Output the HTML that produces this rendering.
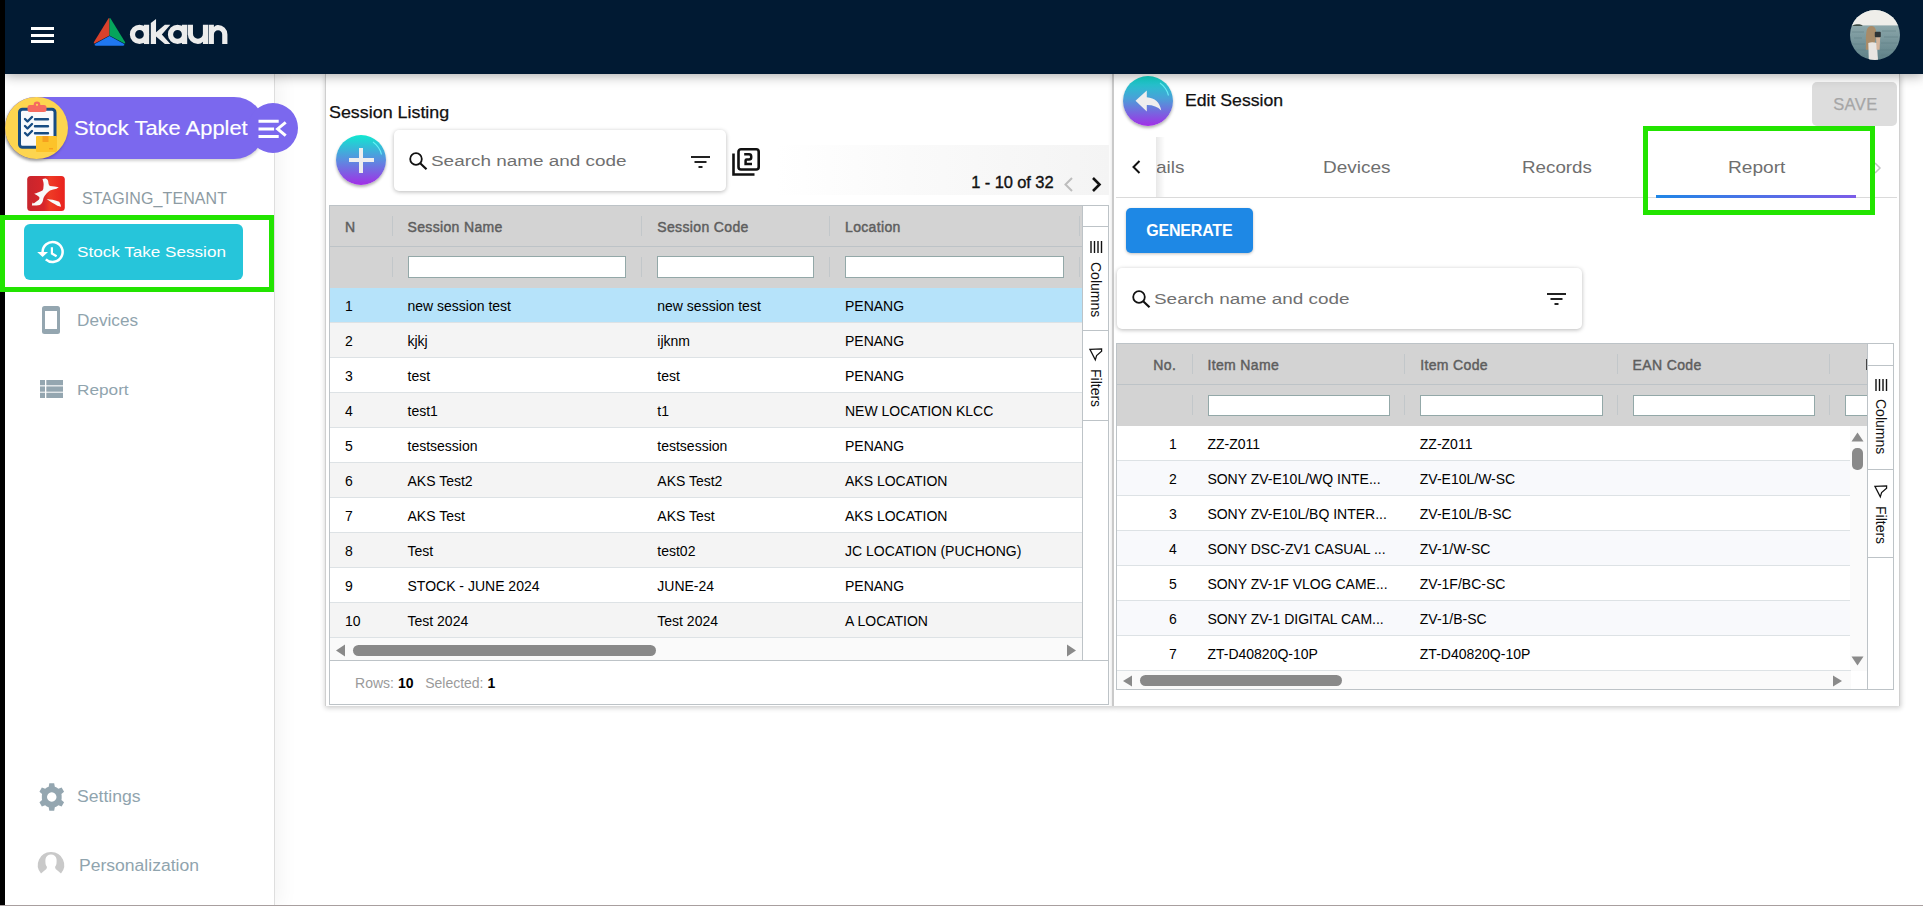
<!DOCTYPE html>
<html><head><meta charset="utf-8">
<style>
*{box-sizing:border-box;margin:0;padding:0}
html,body{width:1923px;height:906px;overflow:hidden;background:#fff;font-family:"Liberation Sans",sans-serif;position:relative}
.a{position:absolute}
.t{position:absolute;white-space:nowrap;line-height:1}
svg{position:absolute;overflow:visible}
</style></head>
<body>
<div class="a" style="left:0px;top:0px;width:5px;height:906px;background:#000;z-index:50"></div>
<div class="a" style="left:5px;top:0px;width:1918px;height:74px;background:#011a33;z-index:40;box-shadow:0 1px 12px rgba(0,0,0,.38)"></div>
<div class="a" style="left:0;top:0;width:1923px;height:74px;z-index:41">
<div class="a" style="left:31px;top:27px;width:23px;height:3px;background:#fff"></div>
<div class="a" style="left:31px;top:33.5px;width:23px;height:3px;background:#fff"></div>
<div class="a" style="left:31px;top:40px;width:23px;height:3px;background:#fff"></div>
<svg style="left:93px;top:17px" width="34" height="30" viewBox="0 0 34 30">
<path d="M15.6 1.2 Q16.5 0.6 16.5 2 L16.5 18.5 L1.5 26.5 Q0.2 26.5 1 25 Z" fill="#d9412b"/>
<path d="M17.4 1.2 Q16.5 0.6 16.5 2 L16.5 18.5 L31.5 26.5 Q32.8 26.5 32 25 Z" fill="#06a45c"/>
<path d="M16.5 19 L1.8 27 Q1 28.6 3 28.8 L30 28.8 Q32 28.6 31.2 27 Z" fill="#1f77f0"/>
</svg>
<svg style="left:126px;top:14px" width="106" height="36" viewBox="0 0 1923 653"><g fill="#ececec" fill-rule="evenodd">
<path d="M70 370 A175 175 0 1 0 420 370 A175 175 0 1 0 70 370 Z M165 370 A80 80 0 1 1 325 370 A80 80 0 1 1 165 370 Z"/>
<rect x="325" y="195" width="95" height="350"/>
<path d="M450 165 L545 90 V545 H450 Z M545 330 L705 195 H805 L650 370 L805 545 H705 L545 410 Z"/>
<path d="M760 370 A175 175 0 1 0 1110 370 A175 175 0 1 0 760 370 Z M855 370 A80 80 0 1 1 1015 370 A80 80 0 1 1 855 370 Z"/>
<rect x="1015" y="195" width="95" height="350"/>
<path d="M1120 195 H1215 V360 A90 90 0 0 0 1395 360 V195 H1490 V545 H1395 V505 Q1360 545 1305 545 A185 185 0 0 1 1120 360 Z"/>
<path d="M1500 545 V195 H1595 V235 Q1630 195 1670 200 A170 170 0 0 1 1840 370 V545 H1745 V370 A75 75 0 0 0 1595 370 V545 Z"/>
</g></svg>
<svg style="left:1850px;top:10px" width="50" height="50" viewBox="0 0 50 50">
<defs><clipPath id="avc"><circle cx="25" cy="25" r="25"/></clipPath><linearGradient id="sea" x1="0" y1="0" x2="0" y2="1"><stop offset="0" stop-color="#a3b9ba"/><stop offset=".5" stop-color="#7f9ca1"/><stop offset="1" stop-color="#5f8188"/></linearGradient></defs>
<g clip-path="url(#avc)">
<rect x="0" y="0" width="50" height="50" fill="url(#sea)"/>
<path d="M2 22 H14 M32 21 H46 M4 28 H12 M34 27 H48 M1 34 H15 M31 33 H47 M5 40 H16 M30 40 H45 M8 46 H15 M31 45 H42" stroke="#5e7e84" stroke-width="0.9" opacity=".6"/>
<rect x="0" y="0" width="50" height="15.4" fill="#efeeea"/>
<path d="M2.2 15.9 Q4 13.8 8 14.3 Q11 13.6 12.9 15.9 Z" fill="#3a4a44"/>
<path d="M16.5 21 Q17.5 15.9 21.8 15.9 Q25.5 16.2 26 21 L25.5 30 Q24 36 22 39.7 L15.8 39.7 Q16.3 33 15.8 27 Z" fill="#a88b68"/>
<path d="M18.3 33 Q22 31.5 26.8 33 L28 50 L18.8 50 Z" fill="#e8e5e1"/>
<path d="M26 26.6 L30.2 27 L29.6 39.7 L26.6 39.7 Z" fill="#d5b59c"/>
<rect x="24.8" y="21.8" width="6" height="5.4" rx="1" fill="#2e3436"/>
</g></svg>
</div>
<div class="a" style="left:5px;top:74px;width:270px;height:832px;background:#fff;border-right:1px solid #dedede;z-index:20;box-shadow:4px 0 20px rgba(0,0,0,.055)"></div>
<div class="a" style="left:0;top:0;width:1923px;height:906px;z-index:55">
<div class="a" style="left:5px;top:97px;width:260px;height:62px;background:#7b68ee;border-radius:31px;box-shadow:0 2px 3px rgba(0,0,0,.18)"></div>
<div class="a" style="left:248px;top:103px;width:50px;height:50px;background:#7b68ee;border-radius:50%"></div>
<div class="a" style="left:5px;top:97px;width:63px;height:62px;background:#fdd54f;border-radius:50%;box-shadow:-1px 2px 3px rgba(0,0,0,.25)"></div>
<svg style="left:17px;top:101px" width="42" height="52" viewBox="0 0 42 52">
<rect x="2.5" y="8.2" width="35.5" height="38" rx="3" fill="#f8fafc" stroke="#174c83" stroke-width="3"/>
<rect x="10.5" y="4" width="19" height="7" rx="2.5" fill="#f56b60"/>
<circle cx="20" cy="3.8" r="3.3" fill="#f56b60"/><circle cx="20" cy="3.8" r="1.1" fill="#fdd54f"/>
<path d="M8 18 L10.5 20.5 L15 16 M8 25 L10.5 27.5 L15 23 M8 32 L10.5 34.5 L15 30" stroke="#174c83" stroke-width="2.4" fill="none" stroke-linecap="round" stroke-linejoin="round"/>
<path d="M18 18.3 H31 M18 25.3 H31 M18 32.3 H31" stroke="#174c83" stroke-width="2.4" stroke-linecap="round"/>
<rect x="19" y="35" width="21" height="16" rx="1" fill="#fcc32a"/>
<rect x="25.5" y="35" width="6" height="6" fill="#f6a01e"/>
<rect x="32" y="47" width="4" height="1.4" fill="#f6a01e"/>
</svg>
<div class="t" style="left:74.00px;top:118.27px;font-size:20px;color:#fff;font-weight:400;letter-spacing:0px;transform:scaleX(1.095);transform-origin:0 0;-webkit-text-stroke:0.15px #fff">Stock Take Applet</div>
<svg style="left:258px;top:118px" width="30" height="22" viewBox="0 0 30 22">
<path d="M0.5 3.3 H20.7 M0.5 11.1 H16.1 M0.5 18.4 H20.7" stroke="#fff" stroke-width="3"/>
<path d="M27.7 4.3 L19.6 10.9 L27.7 17.7" stroke="#fff" stroke-width="3" fill="none"/>
</svg>
<svg style="left:27px;top:176px" width="38" height="35" viewBox="0 0 38 35">
<defs><linearGradient id="rg" x1="0" x2="1"><stop offset="0" stop-color="#c7252d"/><stop offset=".45" stop-color="#d8262a"/><stop offset=".6" stop-color="#ee3b25"/><stop offset="1" stop-color="#e9221e"/></linearGradient></defs>
<rect x="0.2" y="0" width="37.6" height="35" rx="3.5" fill="url(#rg)"/>
<path fill="#f8fafa" d="M15.5 3 Q17.5 2.2 18.8 2.5 Q20.8 3.5 21.1 4.8 L21.6 8.1 Q22 9.5 23 9.9 Q28 10.2 31.8 11.3 Q30.5 12.3 29.5 12.7 Q26 13.4 23 14.5 Q21 15.8 19.3 17.8 Q17.5 19.8 16.5 22 Q16 24.5 15.5 26.1 Q14.5 28.2 12.8 28.9 Q8.5 29.6 4.9 29.4 Q5 27.8 5.8 26.6 L6.7 27.4 Q9.5 25.5 11.8 23.8 Q12.8 22.5 12.3 21 Q10 19 7.2 17.8 Q9 17 10.9 16.4 Q13.5 15.6 15.5 14.5 Q16.6 12.5 16.5 10.4 Q16.8 8.5 16.5 6.7 Q16 4.5 15.5 3 Z"/>
<path fill="#f8fafa" d="M19.7 22.9 Q23 23.2 25.7 23.8 Q29.5 24.6 32.2 25.7 Q33.8 28 34.1 30.8 Q32 30.5 30.4 29.8 Q27.5 28.2 24.8 26.6 Q22 24.8 19.7 22.9 Z"/>
</svg>
<div class="t" style="left:82.00px;top:190.96px;font-size:16px;color:#8d9ba3;font-weight:400;letter-spacing:0.1px;">STAGING_TENANT</div>
<div class="a" style="left:24px;top:224px;width:219px;height:56px;background:#26c5da;border-radius:6px"></div>
<svg style="left:30px;top:232px" width="42" height="40" viewBox="0 0 42 40">
<path d="M12.6 20.3 A10 10 0 1 1 15.8 27.3" stroke="#fff" stroke-width="2.5" fill="none"/>
<path d="M7.2 20 L18 20 L12.6 25 Z" fill="#fff"/>
<path d="M21.9 15.3 V21.5 L26.6 24.3" stroke="#fff" stroke-width="2.2" fill="none"/>
</svg>
<div class="t" style="left:76.70px;top:243.90px;font-size:15px;color:#fff;font-weight:400;letter-spacing:0px;transform:scaleX(1.14);transform-origin:0 0;">Stock Take Session</div>
<div class="a" style="left:0px;top:215px;width:274px;height:77px;border:5px solid #22e400;z-index:60"></div>
<svg style="left:42px;top:306px" width="18" height="28" viewBox="0 0 18 28">
<rect x="0" y="0" width="18" height="28" rx="2.5" fill="#94a6b0"/>
<rect x="3" y="5" width="12" height="18" fill="#fff"/>
</svg>
<div class="t" style="left:77.10px;top:312.56px;font-size:16px;color:#90a4ae;font-weight:400;letter-spacing:0px;transform:scaleX(1.072);transform-origin:0 0;">Devices</div>
<svg style="left:40px;top:380px" width="23" height="18" viewBox="0 0 23 18">
<g fill="#94a6b0"><rect x="0" y="0" width="5" height="5.3"/><rect x="6.3" y="0" width="16.7" height="5.3"/>
<rect x="0" y="6.4" width="5" height="5.3"/><rect x="6.3" y="6.4" width="16.7" height="5.3"/>
<rect x="0" y="12.7" width="5" height="5.3"/><rect x="6.3" y="12.7" width="16.7" height="5.3"/></g>
</svg>
<div class="t" style="left:77.00px;top:381.68px;font-size:15.5px;color:#90a4ae;font-weight:400;letter-spacing:0px;transform:scaleX(1.11);transform-origin:0 0;">Report</div>
<svg style="left:38.5px;top:784px" width="25.5" height="26" viewBox="-11.6 -11.8 23.2 23.6">
<path fill="#94a6b0" d="M-2.2 -12.5 H2.2 L2.8 -9.3 Q4.6 -8.7 6 -7.5 L9 -8.6 L11.2 -4.8 L8.8 -2.7 Q9.1 -1.3 9 0 Q9.1 1.3 8.8 2.7 L11.2 4.8 L9 8.6 L6 7.5 Q4.6 8.7 2.8 9.3 L2.2 12.5 H-2.2 L-2.8 9.3 Q-4.6 8.7 -6 7.5 L-9 8.6 L-11.2 4.8 L-8.8 2.7 Q-9.1 1.3 -9 0 Q-9.1 -1.3 -8.8 -2.7 L-11.2 -4.8 L-9 -8.6 L-6 -7.5 Q-4.6 -8.7 -2.8 -9.3 Z M0 -4.3 A4.3 4.3 0 1 0 0.01 -4.3 Z"/>
</svg>
<div class="t" style="left:76.60px;top:788.66px;font-size:16px;color:#90a4ae;font-weight:400;letter-spacing:0px;transform:scaleX(1.1);transform-origin:0 0;">Settings</div>
<svg style="left:38px;top:852px" width="26" height="23" viewBox="0 0 26 23">
<path fill="#c9c9c9" d="M13 0 A13 13 0 0 0 3 21.5 L6.5 18.5 Q9 17 9 15 Q6.8 12 7.5 7 Q8.5 2.5 13 2.5 Q17.5 2.5 18.5 7 Q19.2 12 17 15 Q17 17 19.5 18.5 L23 21.5 A13 13 0 0 0 13 0 Z"/>
</svg>
<div class="t" style="left:79.30px;top:857.76px;font-size:16px;color:#90a4ae;font-weight:400;letter-spacing:0px;transform:scaleX(1.097);transform-origin:0 0;">Personalization</div>
</div>
<div class="a" style="left:0px;top:905px;width:1923px;height:1px;background:#a89f9f;z-index:60"></div>
<div class="a" style="left:0;top:0;width:1923px;height:906px;z-index:10">
<div class="a" style="left:325px;top:74px;width:788px;height:632px;background:#fff;border-left:1px solid #cfcfcf;box-shadow:0 2px 5px rgba(0,0,0,.2)"></div>
<div class="a" style="left:1112px;top:74px;width:788px;height:632px;background:#fff;border-left:2px solid #cacaca;border-right:1px solid #d0d0d0;box-shadow:1px 2px 5px rgba(0,0,0,.2)"></div>
</div>
<div class="a" style="left:0;top:0;width:1923px;height:906px;z-index:11">
<div class="t" style="left:329.10px;top:103.73px;font-size:16.5px;color:#111;font-weight:400;letter-spacing:0px;transform:scaleX(1.083);transform-origin:0 0;-webkit-text-stroke:0.25px #111">Session Listing</div>
<div class="a" style="left:336px;top:135px;width:50px;height:50px;border-radius:50%;background:linear-gradient(#10e8d0,#5a8ee0 50%,#a22ee6);box-shadow:0 2px 3px rgba(0,0,0,.3)"></div>
<div class="a" style="left:348.5px;top:158px;width:25px;height:4.2px;background:#eee"></div>
<div class="a" style="left:358.9px;top:147.5px;width:4.2px;height:25px;background:#eee"></div>
<svg style="left:336px;top:135px" width="50" height="50" viewBox="0 0 50 50"><path d="M37 7 A22 22 0 0 1 45.5 19.5" stroke="rgba(120,255,255,.75)" stroke-width="1.1" fill="none"/></svg>
<div class="a" style="left:394px;top:129.5px;width:332px;height:61px;background:#fff;border-radius:5px;box-shadow:0 1px 4px rgba(0,0,0,.28)"></div>
<svg style="left:408.6px;top:152px" width="19" height="18" viewBox="0 0 19 18"><circle cx="7" cy="7" r="5.8" stroke="#111" stroke-width="1.8" fill="none"/><path d="M11.2 11.2 L17.5 17.2" stroke="#111" stroke-width="2.2"/></svg>
<div class="t" style="left:431.00px;top:153.08px;font-size:15.5px;color:#707070;font-weight:400;letter-spacing:0px;transform:scaleX(1.22);transform-origin:0 0;">Search name and code</div>
<svg style="left:691px;top:155.5px" width="19" height="12" viewBox="0 0 19 12"><path d="M0 1 H19 M3.5 6 H15.5 M7.5 11 H11.5" stroke="#222" stroke-width="2"/></svg>
<svg style="left:732px;top:148px" width="28" height="28" viewBox="0 0 28 28">
<path d="M1.5 5.5 V26.5 H22.5" stroke="#111" stroke-width="2.6" fill="none"/>
<rect x="6.5" y="1.3" width="20.2" height="20.2" rx="2.5" stroke="#111" stroke-width="2.6" fill="none"/>
<path d="M12.2 6.3 H17 Q19.2 6.3 19.2 8.5 V9.6 Q19.2 11.6 17 11.6 H14.6 Q13.6 11.6 13.6 12.6 V16.1 H20" stroke="#111" stroke-width="2.5" fill="none"/>
</svg>
<div class="a" style="left:776px;top:145px;width:333px;height:50px;background:linear-gradient(90deg,#fff,#fafafa 40%,#f4f4f4)"></div>
<div class="t" style="left:971.20px;top:174.23px;font-size:16.5px;color:#111;font-weight:400;letter-spacing:-0.1px;-webkit-text-stroke:0.35px #111">1 - 10 of 32</div>
<svg style="left:1063px;top:177px" width="11" height="15" viewBox="0 0 11 15"><path d="M9 1 L2.5 7.5 L9 14" stroke="#bdbdbd" stroke-width="2" fill="none"/></svg>
<svg style="left:1091px;top:177px" width="11" height="15" viewBox="0 0 11 15"><path d="M2 1 L8.5 7.5 L2 14" stroke="#111" stroke-width="2.6" fill="none"/></svg>
<div class="a" style="left:329px;top:205px;width:780px;height:500px;border:1px solid #bdc3c7;background:#fff"></div>
<div class="a" style="left:330px;top:206px;width:753px;height:41px;background:#d3d3d3"></div>
<div class="a" style="left:330px;top:246px;width:753px;height:1px;background:#bdc3c7"></div>
<div class="a" style="left:330px;top:247px;width:753px;height:41px;background:#d3d3d3"></div>
<div class="t" style="left:345.00px;top:220.15px;font-size:14px;color:#5e5e5e;font-weight:400;letter-spacing:0.35px;-webkit-text-stroke:0.45px #5e5e5e">N</div>
<div class="t" style="left:407.50px;top:220.15px;font-size:14px;color:#5e5e5e;font-weight:400;letter-spacing:0.35px;-webkit-text-stroke:0.45px #5e5e5e">Session Name</div>
<div class="t" style="left:657.30px;top:220.15px;font-size:14px;color:#5e5e5e;font-weight:400;letter-spacing:0.35px;-webkit-text-stroke:0.45px #5e5e5e">Session Code</div>
<div class="t" style="left:845.00px;top:220.15px;font-size:14px;color:#5e5e5e;font-weight:400;letter-spacing:0.35px;-webkit-text-stroke:0.45px #5e5e5e">Location</div>
<div class="a" style="left:391.5px;top:216px;width:1px;height:20px;background:#c2c7ca"></div>
<div class="a" style="left:391.5px;top:257px;width:1px;height:20px;background:#c2c7ca"></div>
<div class="a" style="left:641.3px;top:216px;width:1px;height:20px;background:#c2c7ca"></div>
<div class="a" style="left:641.3px;top:257px;width:1px;height:20px;background:#c2c7ca"></div>
<div class="a" style="left:829px;top:216px;width:1px;height:20px;background:#c2c7ca"></div>
<div class="a" style="left:829px;top:257px;width:1px;height:20px;background:#c2c7ca"></div>
<div class="a" style="left:1079px;top:216px;width:1px;height:20px;background:#c2c7ca"></div>
<div class="a" style="left:1079px;top:257px;width:1px;height:20px;background:#c2c7ca"></div>
<div class="a" style="left:407.5px;top:256px;width:218.79999999999995px;height:21.5px;background:#fff;border:1px solid #93a8a8"></div>
<div class="a" style="left:657.3px;top:256px;width:156.70000000000005px;height:21.5px;background:#fff;border:1px solid #93a8a8"></div>
<div class="a" style="left:845px;top:256px;width:219px;height:21.5px;background:#fff;border:1px solid #93a8a8"></div>
<div class="a" style="left:330px;top:288px;width:753px;height:35px;background:#b6e3fa;border-bottom:1px solid #dde2e5"></div>
<div class="t" style="left:345.00px;top:298.65px;font-size:14px;color:#000;font-weight:400;letter-spacing:0px;">1</div>
<div class="t" style="left:407.50px;top:298.65px;font-size:14px;color:#000;font-weight:400;letter-spacing:0px;">new session test</div>
<div class="t" style="left:657.30px;top:298.65px;font-size:14px;color:#000;font-weight:400;letter-spacing:0px;">new session test</div>
<div class="t" style="left:845.00px;top:298.65px;font-size:14px;color:#000;font-weight:400;letter-spacing:0px;">PENANG</div>
<div class="a" style="left:330px;top:323px;width:753px;height:35px;background:#f4f4f4;border-bottom:1px solid #dde2e5"></div>
<div class="t" style="left:345.00px;top:333.65px;font-size:14px;color:#000;font-weight:400;letter-spacing:0px;">2</div>
<div class="t" style="left:407.50px;top:333.65px;font-size:14px;color:#000;font-weight:400;letter-spacing:0px;">kjkj</div>
<div class="t" style="left:657.30px;top:333.65px;font-size:14px;color:#000;font-weight:400;letter-spacing:0px;">ijknm</div>
<div class="t" style="left:845.00px;top:333.65px;font-size:14px;color:#000;font-weight:400;letter-spacing:0px;">PENANG</div>
<div class="a" style="left:330px;top:358px;width:753px;height:35px;background:#fff;border-bottom:1px solid #dde2e5"></div>
<div class="t" style="left:345.00px;top:368.65px;font-size:14px;color:#000;font-weight:400;letter-spacing:0px;">3</div>
<div class="t" style="left:407.50px;top:368.65px;font-size:14px;color:#000;font-weight:400;letter-spacing:0px;">test</div>
<div class="t" style="left:657.30px;top:368.65px;font-size:14px;color:#000;font-weight:400;letter-spacing:0px;">test</div>
<div class="t" style="left:845.00px;top:368.65px;font-size:14px;color:#000;font-weight:400;letter-spacing:0px;">PENANG</div>
<div class="a" style="left:330px;top:393px;width:753px;height:35px;background:#f4f4f4;border-bottom:1px solid #dde2e5"></div>
<div class="t" style="left:345.00px;top:403.65px;font-size:14px;color:#000;font-weight:400;letter-spacing:0px;">4</div>
<div class="t" style="left:407.50px;top:403.65px;font-size:14px;color:#000;font-weight:400;letter-spacing:0px;">test1</div>
<div class="t" style="left:657.30px;top:403.65px;font-size:14px;color:#000;font-weight:400;letter-spacing:0px;">t1</div>
<div class="t" style="left:845.00px;top:403.65px;font-size:14px;color:#000;font-weight:400;letter-spacing:0px;">NEW LOCATION KLCC</div>
<div class="a" style="left:330px;top:428px;width:753px;height:35px;background:#fff;border-bottom:1px solid #dde2e5"></div>
<div class="t" style="left:345.00px;top:438.65px;font-size:14px;color:#000;font-weight:400;letter-spacing:0px;">5</div>
<div class="t" style="left:407.50px;top:438.65px;font-size:14px;color:#000;font-weight:400;letter-spacing:0px;">testsession</div>
<div class="t" style="left:657.30px;top:438.65px;font-size:14px;color:#000;font-weight:400;letter-spacing:0px;">testsession</div>
<div class="t" style="left:845.00px;top:438.65px;font-size:14px;color:#000;font-weight:400;letter-spacing:0px;">PENANG</div>
<div class="a" style="left:330px;top:463px;width:753px;height:35px;background:#f4f4f4;border-bottom:1px solid #dde2e5"></div>
<div class="t" style="left:345.00px;top:473.65px;font-size:14px;color:#000;font-weight:400;letter-spacing:0px;">6</div>
<div class="t" style="left:407.50px;top:473.65px;font-size:14px;color:#000;font-weight:400;letter-spacing:0px;">AKS Test2</div>
<div class="t" style="left:657.30px;top:473.65px;font-size:14px;color:#000;font-weight:400;letter-spacing:0px;">AKS Test2</div>
<div class="t" style="left:845.00px;top:473.65px;font-size:14px;color:#000;font-weight:400;letter-spacing:0px;">AKS LOCATION</div>
<div class="a" style="left:330px;top:498px;width:753px;height:35px;background:#fff;border-bottom:1px solid #dde2e5"></div>
<div class="t" style="left:345.00px;top:508.65px;font-size:14px;color:#000;font-weight:400;letter-spacing:0px;">7</div>
<div class="t" style="left:407.50px;top:508.65px;font-size:14px;color:#000;font-weight:400;letter-spacing:0px;">AKS Test</div>
<div class="t" style="left:657.30px;top:508.65px;font-size:14px;color:#000;font-weight:400;letter-spacing:0px;">AKS Test</div>
<div class="t" style="left:845.00px;top:508.65px;font-size:14px;color:#000;font-weight:400;letter-spacing:0px;">AKS LOCATION</div>
<div class="a" style="left:330px;top:533px;width:753px;height:35px;background:#f4f4f4;border-bottom:1px solid #dde2e5"></div>
<div class="t" style="left:345.00px;top:543.65px;font-size:14px;color:#000;font-weight:400;letter-spacing:0px;">8</div>
<div class="t" style="left:407.50px;top:543.65px;font-size:14px;color:#000;font-weight:400;letter-spacing:0px;">Test</div>
<div class="t" style="left:657.30px;top:543.65px;font-size:14px;color:#000;font-weight:400;letter-spacing:0px;">test02</div>
<div class="t" style="left:845.00px;top:543.65px;font-size:14px;color:#000;font-weight:400;letter-spacing:0px;">JC LOCATION (PUCHONG)</div>
<div class="a" style="left:330px;top:568px;width:753px;height:35px;background:#fff;border-bottom:1px solid #dde2e5"></div>
<div class="t" style="left:345.00px;top:578.65px;font-size:14px;color:#000;font-weight:400;letter-spacing:0px;">9</div>
<div class="t" style="left:407.50px;top:578.65px;font-size:14px;color:#000;font-weight:400;letter-spacing:0px;">STOCK - JUNE 2024</div>
<div class="t" style="left:657.30px;top:578.65px;font-size:14px;color:#000;font-weight:400;letter-spacing:0px;">JUNE-24</div>
<div class="t" style="left:845.00px;top:578.65px;font-size:14px;color:#000;font-weight:400;letter-spacing:0px;">PENANG</div>
<div class="a" style="left:330px;top:603px;width:753px;height:35px;background:#f4f4f4;border-bottom:1px solid #dde2e5"></div>
<div class="t" style="left:345.00px;top:613.65px;font-size:14px;color:#000;font-weight:400;letter-spacing:0px;">10</div>
<div class="t" style="left:407.50px;top:613.65px;font-size:14px;color:#000;font-weight:400;letter-spacing:0px;">Test 2024</div>
<div class="t" style="left:657.30px;top:613.65px;font-size:14px;color:#000;font-weight:400;letter-spacing:0px;">Test 2024</div>
<div class="t" style="left:845.00px;top:613.65px;font-size:14px;color:#000;font-weight:400;letter-spacing:0px;">A LOCATION</div>
<div class="a" style="left:330px;top:638px;width:753px;height:22px;background:#fafafa"></div>
<div class="a" style="left:330px;top:660px;width:778px;height:1px;background:#bdc3c7"></div>
<svg style="left:335px;top:644px" width="11" height="13" viewBox="0 0 11 13"><path d="M10 0.5 V12.5 L1 6.5 Z" fill="#8a8a8a"/></svg>
<svg style="left:1066px;top:644px" width="11" height="13" viewBox="0 0 11 13"><path d="M1 0.5 V12.5 L10 6.5 Z" fill="#8a8a8a"/></svg>
<div class="a" style="left:353px;top:645px;width:303px;height:11px;background:#898989;border-radius:6px"></div>
<div class="a" style="left:1082px;top:206px;width:1px;height:454px;background:#bdc3c7"></div>
<div class="a" style="left:1083px;top:226px;width:26px;height:1px;background:#bdc3c7"></div>
<div class="a" style="left:1083px;top:329.5px;width:26px;height:1px;background:#bdc3c7"></div>
<div class="a" style="left:1083px;top:420px;width:26px;height:1px;background:#bdc3c7"></div>
<svg style="left:1089.5px;top:241px" width="13" height="12" viewBox="0 0 13 12"><path d="M1 0 V12 M4.5 0 V12 M8 0 V12 M11.5 0 V12" stroke="#111" stroke-width="1.4"/></svg>
<div class="t" style="left:1090.00px;top:278.15px;font-size:14px;color:#111;font-weight:400;letter-spacing:0px;transform:translate(0,0) rotate(90deg);transform-origin:0 0;left:1103px;top:262px">Columns</div>
<svg style="left:1088.8px;top:347.6px" width="14" height="13" viewBox="-0.7 -0.7 14 13"><path d="M0.2 0.7 L11.9 0.3 L11.9 2.5 L6.9 6.9 L5.6 11.2 Z" stroke="#111" stroke-width="1.25" fill="none" stroke-linejoin="miter"/></svg>
<div class="t" style="left:1090.00px;top:278.15px;font-size:14px;color:#111;font-weight:400;letter-spacing:0px;transform:rotate(90deg);transform-origin:0 0;left:1103px;top:369px">Filters</div>
<div class="t" style="left:355.10px;top:675.85px;font-size:14px;color:#000;font-weight:400;letter-spacing:0px;"><span style="color:#9a9a9a">Rows: </span><b>10</b>&nbsp;&nbsp; <span style="color:#9a9a9a">Selected: </span><b>1</b></div>
</div>
<div class="a" style="left:0;top:0;width:1923px;height:906px;z-index:12">
<div class="a" style="left:1123px;top:76px;width:50px;height:50px;border-radius:50%;background:linear-gradient(#10d8c8,#4aa0d8 45%,#a22ee6);box-shadow:0 2px 3px rgba(0,0,0,.3)"></div>
<svg style="left:1123px;top:76px" width="50" height="50" viewBox="0 0 50 50"><path d="M37 7 A22 22 0 0 1 45.5 19.5" stroke="rgba(120,255,255,.75)" stroke-width="1.1" fill="none"/><path d="M12.5 24.8 L23.8 14.4 V21.2 Q36 22 38.2 34.6 Q33 29 23.8 29.1 V35.6 Z" fill="#eee"/></svg>
<div class="t" style="left:1185.40px;top:92.33px;font-size:16.5px;color:#111;font-weight:400;letter-spacing:0px;transform:scaleX(1.07);transform-origin:0 0;-webkit-text-stroke:0.25px #111">Edit Session</div>
<div class="a" style="left:1812px;top:82px;width:85px;height:44px;background:#dddddd;border-radius:5px"></div>
<div class="t" style="left:1833.20px;top:96.13px;font-size:16.5px;color:#a6a6a6;font-weight:400;letter-spacing:0.4px;-webkit-text-stroke:0.25px #a6a6a6">SAVE</div>
<div class="a" style="left:1116px;top:197px;width:781px;height:1px;background:#dadada"></div>
<div class="a" style="left:1116px;top:137px;width:40px;height:60px;background:#fff"></div>
<svg style="left:1131px;top:160px" width="10" height="14" viewBox="0 0 10 14"><path d="M8.5 1 L2.5 7 L8.5 13" stroke="#111" stroke-width="2" fill="none"/></svg>
<div class="t" style="left:1155.60px;top:158.51px;font-size:17px;color:#6f6f6f;font-weight:400;letter-spacing:0px;transform:scaleX(1.12);transform-origin:0 0;clip-path:inset(0 0 0 0.6px)">ails</div>
<div class="a" style="left:1156px;top:137px;width:9px;height:60px;background:linear-gradient(90deg,rgba(0,0,0,.09),rgba(255,255,255,0))"></div>
<div class="t" style="left:1322.60px;top:158.51px;font-size:17px;color:#6f6f6f;font-weight:400;letter-spacing:0px;transform:scaleX(1.117);transform-origin:0 0;">Devices</div>
<div class="t" style="left:1521.50px;top:158.51px;font-size:17px;color:#6f6f6f;font-weight:400;letter-spacing:0px;transform:scaleX(1.104);transform-origin:0 0;">Records</div>
<div class="t" style="left:1728.00px;top:158.51px;font-size:17px;color:#6f6f6f;font-weight:400;letter-spacing:0px;transform:scaleX(1.124);transform-origin:0 0;">Report</div>
<div class="a" style="left:1656px;top:195px;width:200px;height:2.5px;background:linear-gradient(90deg,#1f86e6,#7c5ce8)"></div>
<svg style="left:1874px;top:162px" width="7" height="12" viewBox="0 0 7 12"><path d="M1 1 L6 6 L1 11" stroke="#c4c4c4" stroke-width="1.5" fill="none"/></svg>
<div class="a" style="left:1643px;top:126px;width:232px;height:89px;border:5px solid #22e400"></div>
<div class="a" style="left:1126px;top:208px;width:127px;height:45px;background:#1e88e5;border-radius:5px;box-shadow:0 1px 3px rgba(0,0,0,.25)"></div>
<div class="t" style="left:1146.30px;top:222.76px;font-size:16px;color:#fff;font-weight:700;letter-spacing:-0.2px;">GENERATE</div>
<div class="a" style="left:1117px;top:267.5px;width:465px;height:61px;background:#fff;border-radius:5px;box-shadow:0 1px 4px rgba(0,0,0,.28)"></div>
<svg style="left:1131.6px;top:290.4px" width="19" height="18" viewBox="0 0 19 18"><circle cx="7" cy="7" r="5.8" stroke="#111" stroke-width="1.8" fill="none"/><path d="M11.2 11.2 L17.5 17.2" stroke="#111" stroke-width="2.2"/></svg>
<div class="t" style="left:1154.00px;top:291.18px;font-size:15.5px;color:#707070;font-weight:400;letter-spacing:0px;transform:scaleX(1.22);transform-origin:0 0;">Search name and code</div>
<svg style="left:1547px;top:292.5px" width="19" height="12" viewBox="0 0 19 12"><path d="M0 1 H19 M3.5 6 H15.5 M7.5 11 H11.5" stroke="#222" stroke-width="2"/></svg>
<div class="a" style="left:1116px;top:343px;width:778px;height:347px;border:1px solid #bdc3c7;background:#fff"></div>
<div class="a" style="left:1117px;top:344px;width:751px;height:41px;background:#d3d3d3"></div>
<div class="a" style="left:1117px;top:384px;width:751px;height:1px;background:#bdc3c7"></div>
<div class="a" style="left:1117px;top:385px;width:751px;height:40.5px;background:#d3d3d3"></div>
<div class="a" style="left:1117px;top:344px;width:750px;height:82px;overflow:hidden"><div class="a" style="left:-1117px;top:-344px;width:1923px;height:906px"><div class="t" style="left:1153.30px;top:358.15px;font-size:14px;color:#5e5e5e;font-weight:400;letter-spacing:0.35px;-webkit-text-stroke:0.45px #5e5e5e">No.</div>
<div class="t" style="left:1207.50px;top:358.15px;font-size:14px;color:#5e5e5e;font-weight:400;letter-spacing:0.35px;-webkit-text-stroke:0.45px #5e5e5e">Item Name</div>
<div class="t" style="left:1420.20px;top:358.15px;font-size:14px;color:#5e5e5e;font-weight:400;letter-spacing:0.35px;-webkit-text-stroke:0.45px #5e5e5e">Item Code</div>
<div class="t" style="left:1632.60px;top:358.15px;font-size:14px;color:#5e5e5e;font-weight:400;letter-spacing:0.35px;-webkit-text-stroke:0.45px #5e5e5e">EAN Code</div>
<div class="t" style="left:1844.80px;top:358.15px;font-size:14px;color:#5e5e5e;font-weight:400;letter-spacing:0.35px;-webkit-text-stroke:0.45px #5e5e5e"></div>
<div class="a" style="left:1191.5px;top:354px;width:1px;height:20px;background:#c2c7ca"></div>
<div class="a" style="left:1191.5px;top:395px;width:1px;height:20px;background:#c2c7ca"></div>
<div class="a" style="left:1404.2px;top:354px;width:1px;height:20px;background:#c2c7ca"></div>
<div class="a" style="left:1404.2px;top:395px;width:1px;height:20px;background:#c2c7ca"></div>
<div class="a" style="left:1616.6px;top:354px;width:1px;height:20px;background:#c2c7ca"></div>
<div class="a" style="left:1616.6px;top:395px;width:1px;height:20px;background:#c2c7ca"></div>
<div class="a" style="left:1828.8px;top:354px;width:1px;height:20px;background:#c2c7ca"></div>
<div class="a" style="left:1828.8px;top:395px;width:1px;height:20px;background:#c2c7ca"></div>
<div class="a" style="left:1207.5px;top:394.5px;width:182.70000000000005px;height:21px;background:#fff;border:1px solid #93a8a8"></div>
<div class="a" style="left:1420.2px;top:394.5px;width:182.39999999999986px;height:21px;background:#fff;border:1px solid #93a8a8"></div>
<div class="a" style="left:1632.6px;top:394.5px;width:182.20000000000005px;height:21px;background:#fff;border:1px solid #93a8a8"></div>
<div class="a" style="left:1844.8px;top:394.5px;width:181.20000000000005px;height:21px;background:#fff;border:1px solid #93a8a8"></div>
<div class="a" style="left:1866px;top:359px;width:1.2px;height:11px;background:#444"></div>
</div></div><div class="a" style="left:1117px;top:425.5px;width:734px;height:245px;background:#fff"></div>
<div class="a" style="left:1117px;top:425.5px;width:734px;height:35px;background:#fff;border-bottom:1px solid #dde2e5"></div>
<div class="t" style="left:1176.80px;top:437.15px;font-size:14px;color:#000;font-weight:400;letter-spacing:0px;transform:translateX(-100%)">1</div>
<div class="t" style="left:1207.40px;top:437.15px;font-size:14px;color:#000;font-weight:400;letter-spacing:0px;">ZZ-Z011</div>
<div class="t" style="left:1419.80px;top:437.15px;font-size:14px;color:#000;font-weight:400;letter-spacing:0px;">ZZ-Z011</div>
<div class="a" style="left:1117px;top:460.5px;width:734px;height:35px;background:#f8f9fc;border-bottom:1px solid #dde2e5"></div>
<div class="t" style="left:1176.80px;top:472.15px;font-size:14px;color:#000;font-weight:400;letter-spacing:0px;transform:translateX(-100%)">2</div>
<div class="t" style="left:1207.40px;top:472.15px;font-size:14px;color:#000;font-weight:400;letter-spacing:0px;">SONY ZV-E10L/WQ INTE...</div>
<div class="t" style="left:1419.80px;top:472.15px;font-size:14px;color:#000;font-weight:400;letter-spacing:0px;">ZV-E10L/W-SC</div>
<div class="a" style="left:1117px;top:495.5px;width:734px;height:35px;background:#fff;border-bottom:1px solid #dde2e5"></div>
<div class="t" style="left:1176.80px;top:507.15px;font-size:14px;color:#000;font-weight:400;letter-spacing:0px;transform:translateX(-100%)">3</div>
<div class="t" style="left:1207.40px;top:507.15px;font-size:14px;color:#000;font-weight:400;letter-spacing:0px;">SONY ZV-E10L/BQ INTER...</div>
<div class="t" style="left:1419.80px;top:507.15px;font-size:14px;color:#000;font-weight:400;letter-spacing:0px;">ZV-E10L/B-SC</div>
<div class="a" style="left:1117px;top:530.5px;width:734px;height:35px;background:#f8f9fc;border-bottom:1px solid #dde2e5"></div>
<div class="t" style="left:1176.80px;top:542.15px;font-size:14px;color:#000;font-weight:400;letter-spacing:0px;transform:translateX(-100%)">4</div>
<div class="t" style="left:1207.40px;top:542.15px;font-size:14px;color:#000;font-weight:400;letter-spacing:0px;">SONY DSC-ZV1 CASUAL ...</div>
<div class="t" style="left:1419.80px;top:542.15px;font-size:14px;color:#000;font-weight:400;letter-spacing:0px;">ZV-1/W-SC</div>
<div class="a" style="left:1117px;top:565.5px;width:734px;height:35px;background:#fff;border-bottom:1px solid #dde2e5"></div>
<div class="t" style="left:1176.80px;top:577.15px;font-size:14px;color:#000;font-weight:400;letter-spacing:0px;transform:translateX(-100%)">5</div>
<div class="t" style="left:1207.40px;top:577.15px;font-size:14px;color:#000;font-weight:400;letter-spacing:0px;">SONY ZV-1F VLOG CAME...</div>
<div class="t" style="left:1419.80px;top:577.15px;font-size:14px;color:#000;font-weight:400;letter-spacing:0px;">ZV-1F/BC-SC</div>
<div class="a" style="left:1117px;top:600.5px;width:734px;height:35px;background:#f8f9fc;border-bottom:1px solid #dde2e5"></div>
<div class="t" style="left:1176.80px;top:612.15px;font-size:14px;color:#000;font-weight:400;letter-spacing:0px;transform:translateX(-100%)">6</div>
<div class="t" style="left:1207.40px;top:612.15px;font-size:14px;color:#000;font-weight:400;letter-spacing:0px;">SONY ZV-1 DIGITAL CAM...</div>
<div class="t" style="left:1419.80px;top:612.15px;font-size:14px;color:#000;font-weight:400;letter-spacing:0px;">ZV-1/B-SC</div>
<div class="a" style="left:1117px;top:635.5px;width:734px;height:35px;background:#fff;border-bottom:1px solid #dde2e5"></div>
<div class="t" style="left:1176.80px;top:647.15px;font-size:14px;color:#000;font-weight:400;letter-spacing:0px;transform:translateX(-100%)">7</div>
<div class="t" style="left:1207.40px;top:647.15px;font-size:14px;color:#000;font-weight:400;letter-spacing:0px;">ZT-D40820Q-10P</div>
<div class="t" style="left:1419.80px;top:647.15px;font-size:14px;color:#000;font-weight:400;letter-spacing:0px;">ZT-D40820Q-10P</div>
<div class="a" style="left:1867px;top:344px;width:1px;height:346px;background:#bdc3c7"></div>
<div class="a" style="left:1868px;top:344px;width:25px;height:346px;background:#fff"></div>
<div class="a" style="left:1868px;top:364.5px;width:25px;height:1px;background:#bdc3c7"></div>
<div class="a" style="left:1868px;top:468.5px;width:25px;height:1px;background:#bdc3c7"></div>
<div class="a" style="left:1868px;top:557px;width:25px;height:1px;background:#bdc3c7"></div>
<svg style="left:1874.5px;top:379px" width="13" height="12" viewBox="0 0 13 12"><path d="M1 0 V12 M4.5 0 V12 M8 0 V12 M11.5 0 V12" stroke="#111" stroke-width="1.4"/></svg>
<div class="t" style="left:1090.00px;top:278.15px;font-size:14px;color:#111;font-weight:400;letter-spacing:0px;transform:rotate(90deg);transform-origin:0 0;left:1888px;top:399px">Columns</div>
<svg style="left:1873.7px;top:485.2px" width="14" height="13" viewBox="-0.7 -0.7 14 13"><path d="M0.2 0.7 L11.9 0.3 L11.9 2.5 L6.9 6.9 L5.6 11.2 Z" stroke="#111" stroke-width="1.25" fill="none" stroke-linejoin="miter"/></svg>
<div class="t" style="left:1090.00px;top:278.15px;font-size:14px;color:#111;font-weight:400;letter-spacing:0px;transform:rotate(90deg);transform-origin:0 0;left:1888px;top:506px">Filters</div>
<div class="a" style="left:1850px;top:425.5px;width:17px;height:245px;background:#fafafa"></div>
<svg style="left:1851px;top:432px" width="13" height="10" viewBox="0 0 13 10"><path d="M0.5 9.5 H12.5 L6.5 0.5 Z" fill="#8a8a8a"/></svg>
<svg style="left:1851px;top:656px" width="13" height="10" viewBox="0 0 13 10"><path d="M0.5 0.5 H12.5 L6.5 9.5 Z" fill="#8a8a8a"/></svg>
<div class="a" style="left:1852.4px;top:448.3px;width:10.5px;height:21.5px;background:#898989;border-radius:5px"></div>
<div class="a" style="left:1117px;top:670.5px;width:734px;height:19px;background:#fafafa"></div>
<div class="a" style="left:1117px;top:670px;width:734px;height:1px;background:#dde2e5"></div>
<svg style="left:1122px;top:675px" width="11" height="12" viewBox="0 0 11 12"><path d="M10 0.5 V11.5 L1 6 Z" fill="#8a8a8a"/></svg>
<svg style="left:1832px;top:675px" width="11" height="12" viewBox="0 0 11 12"><path d="M1 0.5 V11.5 L10 6 Z" fill="#8a8a8a"/></svg>
<div class="a" style="left:1139.7px;top:675px;width:202px;height:11px;background:#898989;border-radius:6px"></div>
<div class="a" style="left:1116px;top:343px;width:778px;height:347px;border:1px solid #bdc3c7"></div>
</div>
</body></html>
